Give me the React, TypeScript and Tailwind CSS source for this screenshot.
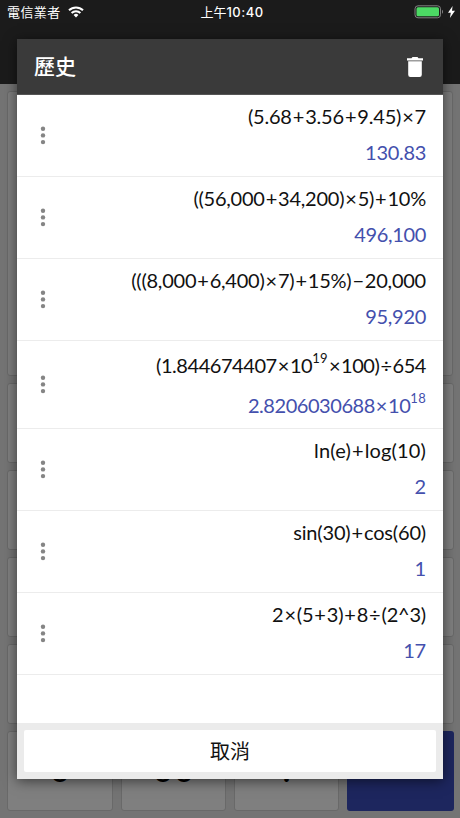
import type { ReactNode } from "react";
import clsx from "clsx";

interface HistoryEntry {
  // "{19}" marks an exponent
  expression: string;
  result: string;
  expressionClass: string;
  resultClass: string;
  tall?: boolean;
}

const HISTORY: HistoryEntry[] = [
  {
    expression: "(5.68+3.56+9.45)×7",
    result: "130.83",
    expressionClass: "tracking-[-0.2px]",
    resultClass: "tracking-[-0.3px]",
  },
  {
    expression: "((56,000+34,200)×5)+10%",
    result: "496,100",
    expressionClass: "tracking-[-0.24px]",
    resultClass: "tracking-[-0.35px]",
  },
  {
    expression: "(((8,000+6,400)×7)+15%)−20,000",
    result: "95,920",
    expressionClass: "tracking-[-0.23px]",
    resultClass: "tracking-[-0.3px]",
  },
  {
    expression: "(1.844674407×10{19}×100)÷654",
    result: "2.8206030688×10{18}",
    expressionClass: "tracking-[-0.45px]",
    resultClass: "tracking-[-0.45px]",
    tall: true,
  },
  {
    expression: "ln(e)+log(10)",
    result: "2",
    expressionClass: "tracking-[0.15px]",
    resultClass: "tracking-[-0.2px]",
  },
  {
    expression: "sin(30)+cos(60)",
    result: "1",
    expressionClass: "tracking-[-0.17px]",
    resultClass: "tracking-[-0.2px]",
  },
  {
    expression: "2×(5+3)+8÷(2^3)",
    result: "17",
    expressionClass: "tracking-[-0.2px]",
    resultClass: "tracking-[-0.2px]",
  },
];

const KEYS = ["", "", "", "", "", "", "", "", "", "", "", "", "", "", "", "", "0", "00", ".", "="];

function Exponent({ children }: { children: ReactNode }) {
  return <span className="relative -top-[10px] text-[13px] leading-none tracking-[0.3px]">{children}</span>;
}

function Formula({ text }: { text: string }) {
  return text.split(/([+×÷−]|\{\d+\})/).map((part, i) => {
    if (part.startsWith("{")) return <Exponent key={i}>{part.slice(1, -1)}</Exponent>;
    if (i % 2 === 1) {
      return (
        <span key={i} className="px-px">
          {part}
        </span>
      );
    }
    return part;
  });
}

function StatusBar() {
  return (
    <div className="relative flex h-6 items-center justify-between pr-[5px] pl-[7px] text-[13px] text-white">
      <div className="flex items-center gap-[7px]">
        <span className="tracking-[0.4px]">電信業者</span>
        <svg width="16" height="12" viewBox="0 0 16 12" fill="none">
          <path d="M1 4.3a10 10 0 0 1 14 0" stroke="#fff" strokeWidth="2" />
          <path d="M3.6 7a6.3 6.3 0 0 1 8.8 0" stroke="#fff" strokeWidth="2" />
          <path d="M8 11.4 5.6 9a3.4 3.4 0 0 1 4.8 0z" fill="#fff" />
        </svg>
      </div>
      <span className="absolute inset-x-0 pl-1 text-center">
        上午
        <span className="font-['Inter','Noto_Sans_CJK_TC',sans-serif] font-medium tracking-[0.5px]">
          10:40
        </span>
      </span>
      <div className="flex items-center gap-1">
        <svg width="30" height="14" viewBox="0 0 30 14" fill="none">
          <rect x="1" y="0.8" width="25.5" height="12" rx="3" stroke="#808080" />
          <rect x="2.5" y="2.3" width="22.5" height="9" rx="1.5" fill="#4cd964" />
          <path d="M28 4.8c1.4.8 1.4 3.2 0 4z" fill="#808080" />
        </svg>
        <svg width="7" height="12" viewBox="0 0 7 12">
          <path d="M4.6 0 0 6.8h2.8L1.9 12 7 4.8H4z" fill="#fff" />
        </svg>
      </div>
    </div>
  );
}

function Calculator() {
  return (
    <div className="px-[7px] pt-[7px]">
      <div className="h-[285px] rounded-[3px] border border-[#696969] bg-[#7d7d7d]" />
      <div className="mt-[7px] grid grid-cols-[106px_105px_105px_107px] gap-x-2 gap-y-[7px]">
        {KEYS.map((label, i) => (
          <div
            key={i}
            className={clsx(
              "flex h-20 items-center justify-center rounded-[3px] pb-[7px] font-['Lato',sans-serif] text-[36px] text-black",
              label === "=" ? "bg-[#1d265e]" : "border border-[#696969] bg-[#7f7f7f]",
            )}
          >
            {label}
          </div>
        ))}
      </div>
    </div>
  );
}

function HistoryRow({ entry }: { entry: HistoryEntry }) {
  return (
    <li
      className={clsx(
        "flex items-center justify-between border-b border-[#ececec] pr-[17px] pl-[23px]",
        entry.tall ? "h-[88px]" : "h-[82px]",
      )}
    >
      <svg width="6" height="20" viewBox="0 0 6 20" fill="#858585">
        <circle cx="3" cy="2.8" r="2.2" />
        <circle cx="3" cy="9.4" r="2.2" />
        <circle cx="3" cy="16.1" r="2.2" />
      </svg>
      <div
        className={clsx(
          "flex flex-col items-end font-['Lato',sans-serif] text-[20px] leading-[24px] whitespace-nowrap",
          entry.tall ? "gap-4" : "gap-3 pb-1",
        )}
      >
        <span className={clsx("text-[#111]", entry.expressionClass)}>
          <Formula text={entry.expression} />
        </span>
        <span className={clsx("text-[#4450ad]", entry.resultClass)}>
          <Formula text={entry.result} />
        </span>
      </div>
    </li>
  );
}

function HistoryDialog() {
  return (
    <section className="absolute top-[39px] left-[17px] flex h-[740px] w-[426px] flex-col bg-white shadow-[0_2px_12px_rgba(0,0,0,0.55)]">
      <header className="flex h-14 shrink-0 items-center justify-between border-b border-[#555] bg-[#3a3a3a] pr-5 pl-[17px] text-white">
        <h1 className="pb-px text-[21px] font-medium">歷史</h1>
        <svg width="16" height="20" viewBox="0 0 16 20" fill="#fff">
          <path d="M0 1.2h4.5L5.5 0h5l1 1.2H16v2.2H0z" />
          <path d="M1.2 4.2h13.6v13.6a2.2 2.2 0 0 1-2.2 2.2H3.4a2.2 2.2 0 0 1-2.2-2.2z" />
        </svg>
      </header>
      <ul className="grow">
        {HISTORY.map((entry, i) => (
          <HistoryRow key={i} entry={entry} />
        ))}
      </ul>
      <footer className="h-14 shrink-0 bg-[#ebebeb] p-[7px]">
        <button className="h-[42px] w-full rounded-[2px] bg-white text-[20px] text-[#111]">取消</button>
      </footer>
    </section>
  );
}

export default function App() {
  return (
    <main className="relative h-[818px] w-[460px] overflow-hidden bg-[#747474] font-['Noto_Sans_CJK_TC',sans-serif]">
      <div className="h-[84px] bg-[#1b1b1b]">
        <StatusBar />
      </div>
      <Calculator />
      <HistoryDialog />
    </main>
  );
}
